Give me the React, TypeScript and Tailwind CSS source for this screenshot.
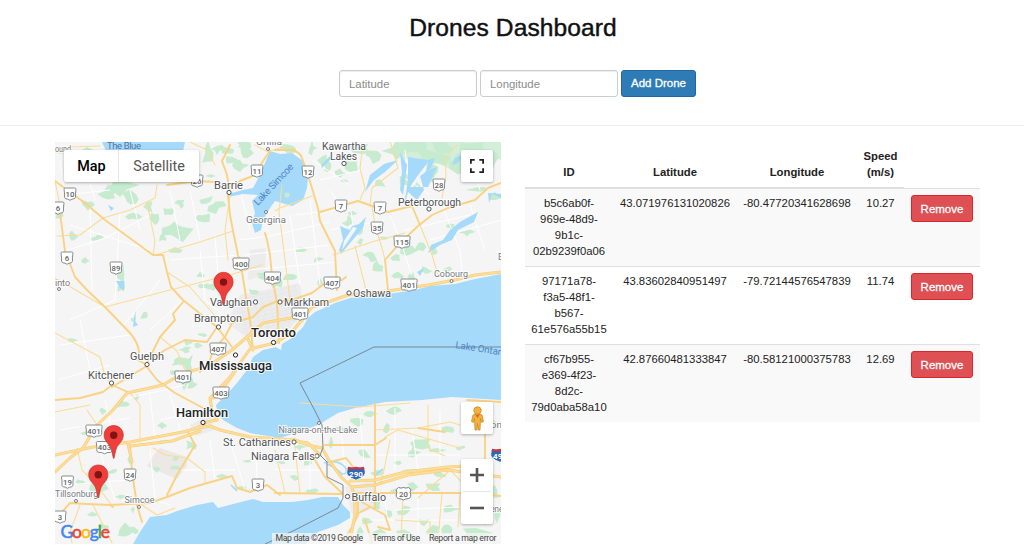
import React from 'react';

const MAJOR = [
  'M55 181L85 203L105 220L153 255L163 255L167 272L171 287L183 300L217 327L232 347',
  'M60 213L65 251L75 277L87 290L105 307L130 333Q138 342 139 352L138 360L147 365',
  'M228 195L230 215L233 231L238 255L242 272L247 303L250 320L253 350',
  'M270 151L263 161L255 175L240 181L228 188M230 145L222 161L227 175L230 193',
  'M265 233L267 240L270 255L272 276L277 303L279 343M215 182L197 181L167 185',
  'M275 150L292 150Q300 152 302 158L308 175L318 208L320 221L335 251L337 290',
  'M320 212L358 201L372 206L388 212L412 206M501 183L488 188L475 200L448 208L432 215L418 226L398 245L385 260L388 290',
  'M412 206L420 225M346 277L342 280L325 283L312 293L292 300L275 302L263 307L253 317L232 323L225 337L213 350L210 360L200 372',
  'M113 507L110 505L87 504L70 503L55 520M110 505L150 503L167 497L190 488L232 476L237 488L250 492L267 485L280 495',
  'M167 495L177 475L195 445L188 432M130 445L132 472L137 505L142 522',
  'M55 400L80 398L103 392L112 385L130 393M147 366L130 376L112 387M147 367L157 380L175 393L203 408',
  'M147 363L160 337L175 320L173 314L183 302M150 360L165 350L185 340L207 342L217 327',
  'M312 455L325 477L342 493M330 462L346 458L354 468M275 493L342 494M355 493L475 493L501 496',
  'M362 502L385 515L390 530L378 527M355 515L370 507M325 445L375 445L386 438',
  'M375 404L375 508M418 428L445 432M485 435L485 462M467 400L501 402',
  'M365 520L372 543M342 543L352 527L358 515L358 502',
];
const HIGHWAY = [
  'M501 272L475 275L455 280L428 285L408 288L388 291L348 295L328 302L312 307L302 320L290 334L275 343L250 349L240 363L230 377L210 398L212 410',
  'M302 316L280 320L263 323L247 337L232 350L207 367L183 373L163 385L127 393L113 410L97 425L83 448L70 458L55 472',
  'M212 410L217 420L207 422L197 428L183 432L130 442L93 447L55 455M198 428L210 426L220 430L250 437L295 440L308 445L322 448',
  'M322 448L330 462L342 478L352 487L355 500L355 515L350 540M352 487L375 485L408 475L448 470L501 477M350 481L375 480L405 472L448 467L465 466',
  'M320 455L308 443L285 440',
  'M236 370L227 383L213 398M247 337L253 350M128 444L132 462M131 446L172 441L200 431',
];
const MINOR = [
  'M57 236L80 235L103 218L130 210L155 198L157 185M153 255L155 241L147 203M155 255L197 243L233 231',
  'M105 307L170 290L230 275L262 265M55 278L105 307M55 333L100 357L105 377L112 385',
  'M390 141L398 168L372 188L370 205M363 145L360 168L365 188L360 200M457 145L445 158L446 175L442 198',
  'M372 206L375 225L382 248L385 260M333 255L375 241L405 233M275 211L280 208L312 196M420 225L432 255L438 275',
  'M140 405L140 442M77 448L82 470L98 487L113 507M80 505L70 532L72 543M93 505L112 543',
  'M153 448L165 455L187 458L205 472L205 482M130 393L140 405M55 181L61 211M97 425L87 410',
  'M375 430L418 428L450 422L460 425M428 405L428 448L445 456M300 403L360 407L410 403M395 520L430 522L430 543',
  'M167 272L190 287L217 318M230 195L225 230L228 260M355 246L366 290M282 185L279 212L290 300',
  'M390 440L384 470L380 484M448 468L470 490M448 472L418 498M458 527L460 494M142 505L157 515L175 508M255 145L268 152L285 146',
  'M56 153L70 147L100 146M190 142L207 150L215 165M55 412L90 405M160 337L177 351L185 370',
  'M275 450L285 493M294 439L300 493M385 437L398 430L460 448M403 493L401 540M442 493L438 540M480 497L485 525',
];
const STREETS = [
  'M65 251L105 238L150 215M90 206L92 290M70 225L150 250M120 212L115 300L70 320M160 280L120 330M183 300L150 330',
  'M200 250L205 300L235 325M215 235L218 275M170 260L240 255M240 240L270 236L330 222M245 255L330 245M248 270L337 262',
  'M290 215L300 285M310 200L320 285M350 205L355 240M330 230L375 222M390 215L400 240L412 275M405 230L470 215M430 240L501 220',
  'M443 208L460 250L463 280M470 205L485 250M60 345L130 335M80 320L92 380M58 380L110 365M120 400L185 385M105 400L112 430',
  'M150 395L155 440M170 395L180 430M160 420L215 408M60 430L130 418M65 485L130 480M100 450L115 500M150 450L155 500L170 505',
  'M180 470L235 470M210 440L215 480M230 440L245 490M255 445L258 490M275 470L325 470M310 440L310 490M340 420L345 470',
  'M360 415L365 475M395 408L395 470M412 430L418 470M440 410L440 465M375 455L460 455M360 500L385 515M385 500L390 540',
  'M418 495L418 540M370 520L460 520M395 510L460 507M60 160L65 195L110 190M90 183L95 200M170 190L180 240M190 190L200 240M130 190L140 230',
  'M240 190L250 230M312 160L350 185M320 180L362 170M400 175L430 195M330 190L340 205M470 160L480 190M405 150L410 190M295 215L335 210',
];
const GREENS: number[][] = [
  [120, 185, 15, 9], [108, 194, 12, 7], [130, 199, 9, 7], [103, 172, 9, 6], [88, 205, 8, 6], [75, 172, 9, 4], [60, 212, 5, 7], [72, 236, 6, 5],
  [174, 228, 13, 8], [183, 235, 12, 7], [163, 238, 5, 4], [168, 212, 5, 4], [181, 203, 5, 5], [148, 207, 5, 6], [155, 219, 5, 8], [133, 217, 7, 4],
  [203, 218, 8, 5], [216, 206, 10, 6], [207, 200, 6, 4], [97, 238, 6, 3], [85, 261, 5, 3], [120, 274, 4, 11], [121, 287, 4, 6], [175, 250, 6, 3],
  [210, 176, 5, 3], [208, 153, 6, 10], [217, 149, 6, 5], [227, 150, 6, 4], [247, 153, 7, 8], [240, 165, 7, 5], [232, 160, 6, 4], [244, 145, 10, 4],
  [64, 151, 6, 3], [87, 152, 8, 4], [288, 148, 8, 5], [302, 174, 3, 7], [312, 148, 4, 6], [322, 160, 5, 6], [328, 167, 5, 5], [350, 166, 9, 6],
  [361, 148, 11, 6], [373, 155, 9, 7], [397, 151, 14, 10], [415, 145, 17, 8], [431, 157, 17, 10], [444, 148, 14, 9], [458, 162, 12, 9], [472, 146, 18, 5], [432, 172, 11, 9],
  [492, 158, 9, 13], [471, 176, 8, 6], [417, 188, 7, 5], [404, 181, 6, 7], [340, 174, 7, 4], [380, 183, 6, 4], [477, 190, 9, 3], [495, 197, 7, 4],
  [406, 250, 9, 5], [419, 247, 6, 6], [396, 258, 6, 5], [433, 249, 6, 5], [467, 232, 7, 5], [451, 227, 5, 3], [371, 255, 7, 6], [360, 242, 4, 3], [377, 266, 6, 6],
  [348, 223, 5, 7], [359, 231, 4, 4], [353, 213, 4, 3], [383, 238, 5, 2], [345, 181, 4, 2], [300, 250, 6, 3], [318, 259, 5, 4], [289, 277, 7, 3],
  [398, 276, 6, 4], [412, 276, 4, 5], [427, 271, 5, 5], [449, 269, 6, 3], [320, 281, 4, 5], [277, 282, 5, 6], [263, 276, 8, 3], [253, 292, 5, 4],
  [204, 286, 7, 4], [210, 287, 5, 5], [200, 275, 5, 3], [144, 315, 4, 4], [73, 340, 5, 3], [133, 320, 3, 3], [185, 350, 7, 3], [178, 362, 7, 4], [188, 363, 5, 9],
  [174, 373, 5, 3], [184, 382, 4, 8], [192, 384, 5, 5], [187, 343, 5, 3], [202, 335, 4, 3], [198, 346, 4, 3], [122, 405, 6, 3], [87, 433, 7, 3], [102, 411, 4, 3],
  [137, 398, 3, 3], [162, 426, 4, 3], [191, 445, 5, 5], [175, 459, 4, 4], [163, 442, 4, 3], [130, 459, 2, 6], [157, 469, 4, 3], [175, 468, 5, 2],
  [98, 489, 8, 5], [113, 472, 5, 3], [81, 482, 4, 3], [120, 497, 5, 2], [125, 530, 7, 6], [135, 530, 4, 4], [104, 526, 5, 3], [92, 514, 5, 2], [133, 510, 3, 3],
  [222, 476, 6, 2], [240, 488, 5, 2], [247, 461, 5, 2], [281, 462, 4, 2], [300, 447, 5, 3], [309, 461, 5, 5], [295, 478, 7, 3], [310, 491, 8, 3], [331, 443, 3, 6],
  [340, 429, 7, 3], [358, 422, 10, 4], [371, 414, 6, 3], [395, 411, 7, 4], [387, 428, 4, 4], [422, 443, 10, 5], [413, 452, 6, 5], [437, 450, 10, 3], [446, 430, 7, 3],
  [364, 454, 7, 4], [377, 473, 6, 4], [397, 463, 4, 3], [410, 471, 8, 3], [440, 475, 7, 3], [433, 487, 8, 4], [413, 487, 8, 5], [395, 491, 7, 2], [451, 509, 8, 4],
  [404, 511, 8, 5], [389, 513, 5, 4], [377, 505, 5, 6], [368, 521, 6, 4], [380, 534, 8, 4], [404, 535, 8, 4], [424, 522, 8, 4], [433, 531, 9, 5], [447, 529, 5, 6],
  [360, 533, 4, 5], [467, 500, 5, 4], [495, 493, 5, 6], [497, 515, 4, 8], [476, 533, 15, 5], [460, 448, 5, 3], [495, 425, 4, 6], [373, 393, 5, 3], [344, 514, 4, 3],
];

function patch([cx, cy, rx, ry]: number[], n: number) {
  const points: string[] = [];
  const corners = 8;
  for (let i = 0; i < corners; i++) {
    const noise = Math.abs(Math.sin(n * 12.9898 + i * 78.233) * 43758.5453) % 1;
    const r = 0.42 + noise * 0.98;
    const a = (i / corners) * Math.PI * 2;
    points.push(`${(cx + Math.cos(a) * rx * r).toFixed(1)},${(cy + Math.sin(a) * ry * r).toFixed(1)}`);
  }
  return points.join(' ');
}

type LabelProps = { x: number; y: number; w: number; children: string; tone?: 'city' | 'town' | 'small'; dot?: [number, number] };

const TONES = {
  city: { color: '#222427', size: 12.9 },
  town: { color: '#505357', size: 11.4 },
  small: { color: '#777b80', size: 9.6 },
};

function Label({ x, y, w, children, tone = 'town', dot }: LabelProps) {
  const { color, size } = TONES[tone];
  return (
    <g>
      {dot && <circle cx={dot[0]} cy={dot[1]} r={tone === 'small' ? 1.5 : 2.1} fill="#fff" stroke={color} strokeWidth="1" />}
      <text x={x} y={y} textLength={w} lengthAdjust="spacingAndGlyphs" fontSize={size} fill={color} stroke="#fff" strokeWidth="2" strokeOpacity=".85" paintOrder="stroke" fontWeight={tone === 'city' ? 500 : 400}>
        {children}
      </text>
    </g>
  );
}

function Shield({ x, y, children }: { x: number; y: number; children: string }) {
  const w = children.length === 3 ? 8.2 : 6;
  return (
    <g transform={`translate(${x} ${y})`}>
      <path d={`M${-w} -5Q${-w} -6 ${-w + 1.5} -6H${w - 1.5}Q${w} -6 ${w} -5L${w - 0.6} 0Q${w} 4.5 ${w - 2} 4.8Q2 4.8 0 6.3Q-2 4.8 ${-w + 2} 4.8Q${-w} 4.5 ${-w + 0.6} 0Z`} fill="#fff" stroke="#7d8083" strokeWidth=".9" />
      <text y="2.7" textAnchor="middle" fontSize="7.8" fontWeight="500" fill="#606366">{children}</text>
    </g>
  );
}

function UsRoute({ x, y, children }: { x: number; y: number; children: string }) {
  return (
    <g transform={`translate(${x} ${y})`}>
      <path d="M-5 -6Q-2.500 -4.800 0 -6Q2.500 -4.800 5 -6L7.500 -3.800Q5.800 -1 7.300 1.500Q7.500 5 3.500 5.300Q1.500 5.300 0 6.600Q-1.500 5.300 -3.500 5.300Q-7.500 5 -7.300 1.500Q-5.800 -1 -7.500 -3.800Z" fill="#fff" stroke="#6d7073" strokeWidth=".9" />
      <text y="3" textAnchor="middle" fontSize="7.800" fontWeight="500" fill="#606366">{children}</text>
    </g>
  );
}

function Interstate({ x, y, children }: { x: number; y: number; children: string }) {
  return (
    <g transform={`translate(${x} ${y})`}>
      <path d="M-7.500 -6.500Q-4 -5 0 -6.500Q4 -5 7.500 -6.500Q10.300 -1 8.600 2Q5.500 5.500 0 7.200Q-5.500 5.500 -8.600 2Q-10.300 -1 -7.500 -6.500Z" fill="#3268b3" stroke="#fff" strokeWidth=".8" />
      <path d="M-7.800 -6.200Q-4 -4.900 0 -6.200Q4 -4.900 7.800 -6.200L8.700 -3.700H-8.700Z" fill="#d8343b" />
      <text y="3.700" textAnchor="middle" fontSize="8" fontWeight="700" fill="#fff">{children}</text>
    </g>
  );
}

function Marker({ x, y }: { x: number; y: number }) {
  return (
    <g transform={`translate(${x} ${y})`}>
      <path d="M0 0C-.8 0 -1.1 -6.2 -2.8 -10.5C-4.8 -15 -9.6 -17.3 -9.6 -23.4C-9.6 -28.8 -5.4 -33 0 -33S9.6 -28.8 9.6 -23.4C9.6 -17.3 4.8 -15 2.8 -10.5C1.1 -6.2 .8 0 0 0Z" fill="#ee3f3a" stroke="#c9302c" strokeWidth=".7" />
      <circle cy="-23.2" r="3.7" fill="#7e1414" />
    </g>
  );
}

const WATER = '#a5dafb';

function MapCanvas() {
  return (
    <svg className="block h-[402px] w-[446px] font-['Roboto',sans-serif]" viewBox="55 142 446 402">
      <rect x="55" y="142" width="446" height="402" fill="#f5f5f5" />
      <path d="M147 466L154 455L160 448L187 457L187 466L177 479L165 474Z" fill="#ece8e6" />
      <g fill="#e8e8e9">
        <path d="M240 295L300 283L304 312L280 340L245 336L227 323Z" opacity=".7" />
        <path d="M345 487L375 480L378 508L352 515ZM250 250L266 248L265 276L248 280ZM190 425L210 415L214 430L196 436Z" opacity=".7" />
      </g>
      <g fill="#c7ebcf">
        {GREENS.map((g, i) => <polygon key={i} points={patch(g, i + 1)} />)}
        <path d="M395 142H501V160L488 154L470 162L452 170L438 163L425 166L415 158L402 160Z" opacity=".75" />
      </g>
      <g fill="none" stroke="#fff" strokeWidth="1">{STREETS.map((d) => <path key={d} d={d} />)}</g>
      <g fill="none" stroke="#e3e5e7" strokeWidth=".5">
        {[0, 1, 2, 3, 4, 5, 6, 7, 8].map((i) => <path key={i} d={`M${239 + i * 7} ${297 - i * 1.5}l9 40M${236 + i} ${301 + i * 4}l60 -15`} />)}
      </g>
      <g fill={WATER}>
        <path d="M102 142H185L183 151Q145 157 106 151Z" />
        <path d="M270 151L280 154L292 153L303 161L308 178L307 188L303 200L292 206L275 201L270 208L263 220L261 230L255 233L252 223L255 213L252 201L258 195L243 194L228 197L228 194L243 190L253 188L260 175L267 158Z" />
        <path d="M365 192L370 175L384 164L398 160L385 172L374 180ZM400 152L407 165L403 195L400 190L402 172ZM408 157L428 160L435 158L431 168L420 176L424 190L417 200L408 192L404 206L408 180ZM428 162L416 178L410 187L428 187L437 167L426 171ZM321 165L328 158L333 153L330 160L322 168Z" />
        <path d="M340 226L350 230L352 226L359 224L366 217L363 228L351 242L341 254L339 250L343 240ZM353 227L344 241L342 250L357 228ZM428 253L431 245L443 240L450 230L460 222L478 212L474 222L458 230L452 240L440 245ZM489 203L488 193L501 194V198L492 194ZM417 272L424 268L420 276ZM108 205L114 208L111 211ZM116 281H124V290L120 288ZM133 327L134 317L136 310L135 321L138 325ZM452 165L455 158L464 154L458 163Z" />
        <path d="M501 274L475 279L455 284L430 286L415 290L395 293L370 296L350 298L335 303L315 312L308 318L303 327L292 338L282 344L281 350L276 347L263 350L253 357L247 370L237 383L228 393L216 405L218 414L223 420L237 428L250 433L280 438L295 433L318 425L338 413L355 408L385 402L422 400L452 397L501 400Z" />
        <path d="M133 544L140 532L150 517L167 515L177 511L197 505L213 502L218 508L237 503L253 499L263 502L280 502L292 502L308 500L322 497L338 497L343 505L350 512L350 518L338 525L318 532L305 544Z" />
      </g>
      <path d="M324 463Q337 459 345 467Q349 474 342 474Q335 467 327 464M231 485L237 491M375 475L383 469" fill="none" stroke={WATER} strokeWidth="1.7" />
      <circle cx="287" cy="195" r="2.6" fill="#c7ebcf" />
      <g fill="none" strokeLinejoin="round" strokeLinecap="round">
        <g stroke="#fbdc96" strokeWidth="1.1">{MINOR.map((d) => <path key={d} d={d} />)}</g>
        <g stroke="#fad283" strokeWidth="1.9">{MAJOR.map((d) => <path key={d} d={d} />)}</g>
        <g stroke="#f7cc70" strokeWidth="3">{HIGHWAY.map((d) => <path key={d} d={d} />)}</g>
        <g stroke="#fddc9a" strokeWidth="1.9">{HIGHWAY.map((d) => <path key={d} d={d} />)}</g>
      </g>
      <path d="M501 347H374L300 383L314 409L322 425L323 448L320 455L327 462V477L343 485V498L338 508L295 530L265 544" fill="none" stroke="#7d8790" strokeWidth="1" />

      <Label x={55} y={152} w={16} tone="small">ound</Label>
      <text x="107" y="149" textLength="34" fontSize="9.5" fill="#55749f">The Blue</text>
      <text transform="translate(258 206) rotate(-47)" textLength="53" fontSize="9.8" fill="#5484c4">Lake Simcoe</text>
      <text transform="translate(455 348) rotate(9)" textLength="54" fontSize="9.8" fill="#5484c4">Lake Ontario</text>
      <Label x={256} y={145} w={26} tone="small" dot={[268, 149]}>Orillia</Label>
      <Label x={214} y={188.5} w={29} dot={[229, 192.5]}>Barrie</Label>
      <Label x={246} y={222.5} w={40} tone="small" dot={[266, 212]}>Georgina</Label>
      <Label x={322} y={149.5} w={44}>Kawartha</Label>
      <Label x={330} y={160} w={27} dot={[344, 163.5]}>Lakes</Label>
      <Label x={398} y={205.5} w={63} dot={[429, 209]}>Peterborough</Label>
      <Label x={434} y={277} w={34} tone="small" dot={[451.5, 281]}>Cobourg</Label>
      <Label x={498} y={260} w={34} tone="small">Belleville</Label>
      <Label x={55} y={285.5} w={15} tone="small" dot={[59, 289]}>into</Label>
      <Label x={210} y={306} w={42} dot={[255.5, 302]}>Vaughan</Label>
      <Label x={284} y={306} w={45} dot={[280, 302]}>Markham</Label>
      <Label x={353} y={297} w={38} dot={[349, 293]}>Oshawa</Label>
      <Label x={194} y={322} w={48} dot={[218.5, 327]}>Brampton</Label>
      <Label x={251} y={337} w={45} tone="city" dot={[273.5, 342.5]}>Toronto</Label>
      <Label x={199} y={370} w={73} tone="city" dot={[235.5, 355]}>Mississauga</Label>
      <Label x={130} y={360} w={34} dot={[147, 364.5]}>Guelph</Label>
      <Label x={88} y={379} w={46} dot={[111.5, 383]}>Kitchener</Label>
      <Label x={176} y={417} w={52} tone="city" dot={[203, 422.5]}>Hamilton</Label>
      <Label x={223} y={446} w={68} dot={[294, 442]}>St. Catharines</Label>
      <Label x={278.500} y={433} w={79} tone="small" dot={[319, 423]}>Niagara-on-the-Lake</Label>
      <Label x={251} y={460} w={64} dot={[317, 456]}>Niagara Falls</Label>
      <Label x={351.500} y={501} w={34.5} dot={[347.5, 496.5]}>Buffalo</Label>
      <Label x={55} y={497} w={43} tone="small" dot={[76, 501]}>Tillsonburg</Label>
      <Label x={124.500} y={502.5} w={30} tone="small" dot={[139, 507]}>Simcoe</Label>
      <Label x={474} y={428} w={28} tone="small">Albion</Label>
      <Label x={485} y={511.5} w={31} tone="small">Geneseo</Label>

      <Shield x={70} y={194}>10</Shield><Shield x={58} y={208}>6</Shield><Shield x={67} y={258}>6</Shield>
      <Shield x={116} y={268}>89</Shield><Shield x={197} y={181}>26</Shield><Shield x={257} y={171}>11</Shield>
      <Shield x={308} y={172}>12</Shield><Shield x={341} y={206}>7</Shield><Shield x={380} y={208}>7</Shield>
      <Shield x={377} y={228}>35</Shield><Shield x={402} y={242}>115</Shield><Shield x={439} y={185}>28</Shield>
      <Shield x={241} y={264}>400</Shield><Shield x={272.5} y={278}>404</Shield><Shield x={332} y={283}>407</Shield>
      <Shield x={409} y={285}>401</Shield><Shield x={300} y={314}>401</Shield><Shield x={218} y={349}>407</Shield>
      <Shield x={183} y={377}>401</Shield><Shield x={221} y={393}>403</Shield><Shield x={94} y={431}>401</Shield>
      <Shield x={104.500} y={447.500}>403</Shield><Shield x={130} y={475}>24</Shield><Shield x={67.5} y={482}>19</Shield>
      <Shield x={60} y={517}>3</Shield><Shield x={258} y={485}>3</Shield>
      <UsRoute x={403.500} y={493.500}>20</UsRoute>
      <Interstate x={356} y={473}>290</Interstate><Interstate x={500} y={455}>490</Interstate>

      <Marker x={223.5} y={305.3} />
      <Marker x={113.7} y={458.5} />
      <Marker x={98.3} y={498} />

      <text x="60.5" y="538" textLength="49.5" fontSize="17.5" fontFamily="Lato, sans-serif" strokeWidth=".5">
        <tspan fill="#4285f4" stroke="#4285f4">G</tspan><tspan fill="#ea4335" stroke="#ea4335">o</tspan><tspan fill="#fbbc05" stroke="#fbbc05">o</tspan><tspan fill="#4285f4" stroke="#4285f4">g</tspan><tspan fill="#34a853" stroke="#34a853">l</tspan><tspan fill="#ea4335" stroke="#ea4335">e</tspan>
      </text>
      <rect x="272" y="533" width="229" height="11" fill="#f5f5f5" opacity=".75" />
      <g fontSize="8.7" fill="#444">
        <text x="275.5" y="541" textLength="87.5">Map data ©2019 Google</text>
        <text x="372.5" y="541" textLength="47.5">Terms of Use</text>
        <text x="429" y="541" textLength="67.5">Report a map error</text>
      </g>
    </svg>
  );
}

function DroneMap() {
  return (
    <section className="relative h-[402px] w-[446px] shrink-0 overflow-hidden font-['Roboto',sans-serif]">
      <MapCanvas />
      <div className="absolute left-[9px] top-2 flex h-8 w-[135px] rounded-xs bg-white text-[14.4px] leading-[33px] shadow-[0_1px_3px_rgba(0,0,0,.3)]">
        <button className="w-[55px] border-r border-[#e6e6e6] pl-px font-medium text-black">Map</button>
        <button className="flex-1 text-[#565656]">Satellite</button>
      </div>
      <button className="absolute left-[406px] top-2 flex size-8 items-center justify-center rounded-xs bg-white shadow-[0_1px_3px_rgba(0,0,0,.3)]">
        <svg className="size-[14px]" viewBox="0 0 14 14" fill="none" stroke="#222" strokeWidth="1.800"><path d="M.9 4.700V.9H4.700M9.300 .9H13.100V4.700M13.100 9.300V13.100H9.300M4.700 13.100H.9V9.300" /></svg>
      </button>
      <button className="absolute left-[406px] top-[260px] flex size-8 items-center justify-center rounded-xs bg-white shadow-[0_1px_3px_rgba(0,0,0,.3)]">
        <svg className="h-[25px] w-[15px]" viewBox="0 0 15 25">
          <path d="M3 9Q7.500 6.500 12 9L13.500 15.500L11.700 16.500L10.500 12.500L10 24H8.200L7.500 17.500L6.800 24H5L4.500 12.500L3.300 16.500L1.500 15.500Z" fill="#f5b13d" stroke="#c98a24" strokeWidth=".8" />
          <path d="M5 8.500H10L7.500 12Z" fill="#e5672c" />
          <circle cx="7.500" cy="4.500" r="3.700" fill="#f5b13d" stroke="#c98a24" strokeWidth=".8" />
        </svg>
      </button>
      <div className="absolute left-[406px] top-[317px] flex h-[65px] w-8 flex-col items-center rounded-xs bg-white shadow-[0_1px_3px_rgba(0,0,0,.3)]">
        <button className="flex h-8 items-center"><svg className="size-[14px]" viewBox="0 0 14 14" stroke="#555" strokeWidth="2.600"><path d="M0 7H14M7 0V14" /></svg></button>
        <span className="h-px w-7 bg-[#e6e6e6]" />
        <button className="flex h-8 items-center"><svg className="size-[14px]" viewBox="0 0 14 14" stroke="#555" strokeWidth="2.600"><path d="M0 7H14" /></svg></button>
      </div>
    </section>
  );
}

const drones = [
  { id: ['b5c6ab0f-', '969e-48d9-', '9b1c-', '02b9239f0a06'], lat: '43.071976131020826', lng: '-80.47720341628698', speed: '10.27' },
  { id: ['97171a78-', 'f3a5-48f1-', 'b567-', '61e576a55b15'], lat: '43.83602840951497', lng: '-79.72144576547839', speed: '11.74' },
  { id: ['cf67b955-', 'e369-4f23-', '8d2c-', '79d0aba58a10'], lat: '42.87660481333847', lng: '-80.58121000375783', speed: '12.69' },
];

function DroneTable() {
  return (
    <table className="w-[455px] table-fixed border-separate border-spacing-0 text-center text-[11.3px] leading-4 text-[#222]">
      <colgroup>
        <col className="w-[88px]" /><col className="w-[124px]" /><col className="w-[120px]" /><col className="w-[47px]" /><col className="w-[76px]" />
      </colgroup>
      <thead>
        <tr className="h-[46px] align-bottom [&>th]:pb-[7px] [&>th:not(:last-child)]:border-b [&>th]:border-[#ddd]">
          <th>ID</th><th>Latitude</th><th>Longitude</th><th>Speed<br />(m/s)</th><th />
        </tr>
      </thead>
      <tbody>
        {drones.map((d) => (
          <tr key={d.lat} className="h-[78px] align-top odd:bg-[#f9f9f9] [&>td]:border-t [&>td]:border-[#e0e0e0] [&>td]:pt-1.5">
            <td>{d.id.map((part) => <span key={part} className="block">{part}</span>)}</td>
            <td>{d.lat}</td>
            <td>{d.lng}</td>
            <td>{d.speed}</td>
            <td>
              <button className="ml-[7px] block h-[27px] w-[62px] rounded-[3px] border border-[#d9262a] bg-[#de5053] text-[11.5px] text-white [-webkit-text-stroke:0.3px_white]">Remove</button>
            </td>
          </tr>
        ))}
      </tbody>
    </table>
  );
}

export default function App() {
  const field = 'h-[27px] w-[138px] rounded-[3px] border border-[#ccc] px-[9px] text-[11.4px] outline-none placeholder:text-[#8b8b8b] shadow-[inset_0_1px_1px_rgba(0,0,0,.075)]';
  return (
    <div className="h-[554px] w-[1024px] overflow-hidden bg-white font-['Liberation_Sans',Arial,sans-serif]">
      <header className="flex h-[126px] flex-col items-center border-b border-[#eee]">
        <h1 className="mt-[14px] ml-[2px] h-7 text-[24.6px] leading-7 tracking-[0.08px] text-[#111] [-webkit-text-stroke:0.45px_#111]">Drones Dashboard</h1>
        <form className="mt-7 ml-[11px] flex gap-[3px]">
          <input className={field} placeholder="Latitude" />
          <input className={field} placeholder="Longitude" />
          <button type="button" className="h-[27px] w-[75px] rounded-[3px] border border-[#2264a5] bg-[#2f7bb6] text-[11.5px] text-white [-webkit-text-stroke:0.3px_white]">Add Drone</button>
        </form>
      </header>
      <main className="flex items-start gap-6 pl-[55px] pt-4">
        <DroneMap />
        <DroneTable />
      </main>
    </div>
  );
}
